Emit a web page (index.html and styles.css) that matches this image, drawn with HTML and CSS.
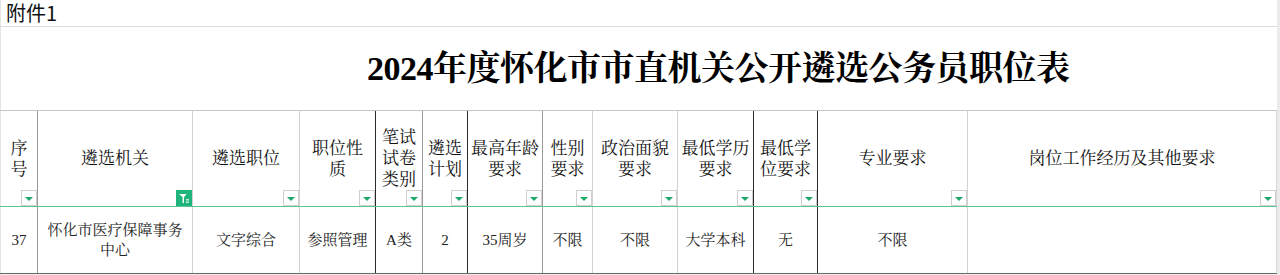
FILE: index.html
```html
<!DOCTYPE html>
<html lang="zh-CN">
<head>
<meta charset="utf-8">
<title>2024年度怀化市市直机关公开遴选公务员职位表</title>
<link rel="stylesheet" href="styles.css">
</head>
<body>
<table class="sheet">
  <colgroup>
    <col style="width:37px"><col style="width:155px"><col style="width:107px"><col style="width:76px">
    <col style="width:47px"><col style="width:45px"><col style="width:75px"><col style="width:50px">
    <col style="width:85px"><col style="width:76px"><col style="width:64px"><col style="width:150px">
    <col style="width:309px">
  </colgroup>
  <tr class="r-att"><td colspan="13" class="att">附件1</td></tr>
  <tr class="r-title"><td colspan="13" class="title">2024年度怀化市市直机关公开遴选公务员职位表</td></tr>
  <tr class="r-head">
    <th class="b-mid">序<br>号<span class="flt"><i></i></span></th>
    <th class="b-light">遴选机关<span class="flt on"><svg viewBox="0 0 16 16" width="16" height="16"><path d="M3 4h7.5L8 7.2V13H6.6V7.2z" fill="#fff"/><rect x="10" y="9.3" width="3" height="1.1" fill="#fff"/><rect x="10" y="11.6" width="3" height="1.1" fill="#fff"/></svg></span></th>
    <th class="b-light">遴选职位<span class="flt"><i></i></span></th>
    <th class="b-dark">职位性<br>质<span class="flt"><i></i></span></th>
    <th class="b-mid">笔试<br>试卷<br>类别<span class="flt"><i></i></span></th>
    <th class="b-dark">遴选<br>计划<span class="flt"><i></i></span></th>
    <th class="b-mid">最高年龄<br>要求<span class="flt"><i></i></span></th>
    <th class="b-light">性别<br>要求<span class="flt"><i></i></span></th>
    <th class="b-light">政治面貌<br>要求<span class="flt"><i></i></span></th>
    <th class="b-dark">最低学历<br>要求<span class="flt"><i></i></span></th>
    <th class="b-dark">最低学<br>位要求<span class="flt"><i></i></span></th>
    <th class="b-light">专业要求<span class="flt"><i></i></span></th>
    <th class="b-none">岗位工作经历及其他要求<span class="flt"><i></i></span></th>
  </tr>
  <tr class="r-data">
    <td class="b-mid">37</td>
    <td class="b-light">怀化市医疗保障事务<br>中心</td>
    <td class="b-light">文字综合</td>
    <td class="b-dark">参照管理</td>
    <td class="b-mid">A类</td>
    <td class="b-dark">2</td>
    <td class="b-mid">35周岁</td>
    <td class="b-light">不限</td>
    <td class="b-light">不限</td>
    <td class="b-dark">大学本科</td>
    <td class="b-dark">无</td>
    <td class="b-light">不限</td>
    <td class="b-none"></td>
  </tr>
</table>
</body>
</html>
```

FILE: styles.css
```css
html, body {
  margin: 0;
  padding: 0;
}
body {
  background: #ebebeb;
  font-family: "Liberation Serif", "Noto Serif CJK SC", "Noto Sans CJK SC", serif;
  color: #000;
}
.sheet {
  width: 1276px;
  background: #fff;
  border-collapse: collapse;
  table-layout: fixed;
  border-left: 1px solid #e4e4e4;
}
.sheet td, .sheet th {
  padding: 0;
  font-weight: normal;
  text-align: center;
  vertical-align: middle;
}
.r-att td {
  height: 26px;
  border-bottom: 1px solid #dcdcdc;
}
.sheet .att {
  text-align: left;
  padding-left: 5px;
  font-family: "Noto Sans CJK SC", "Liberation Sans", sans-serif;
  font-size: 20px;
  line-height: 26px;
  color: #111;
}
.r-title td {
  height: 83px;
  border-bottom: 1px solid #c6c6c6;
}
.sheet .title {
  text-align: left;
  padding-left: 366px;
  font-size: 34px;
  line-height: 40px;
  font-weight: bold;
  letter-spacing: -0.5px;
  color: #000;
}
.r-head th {
  position: relative;
  height: 95px;
  font-size: 17px;
  line-height: 21px;
  border-bottom: 1px solid #5cc495;
  color: #111;
}
.r-data td {
  height: 66px;
  font-size: 15px;
  line-height: 20px;
  color: #222;
  border-bottom: 1px solid #6a6a6a;
}
.b-light { border-right: 1px solid #d2d2d2; }
.b-mid { border-right: 1px solid #9a9a9a; }
.b-dark { border-right: 1px solid #2a2a2a; }
.b-none { border-right: 1px solid #d8d8d8; }

.flt {
  position: absolute;
  right: 0;
  bottom: 0;
  width: 14px;
  height: 14px;
  background: #fff;
  border: 1px solid #cfcfcf;
  display: flex;
  align-items: center;
  justify-content: center;
}
.flt i {
  display: block;
  width: 0;
  height: 0;
  border-left: 4px solid transparent;
  border-right: 4px solid transparent;
  border-top: 4px solid #1fa86c;
  margin-top: 1px;
}
.flt.on {
  width: 16px;
  height: 16px;
  border: none;
  background: #1fb47b;
}
.flt.on svg {
  display: block;
}
```
